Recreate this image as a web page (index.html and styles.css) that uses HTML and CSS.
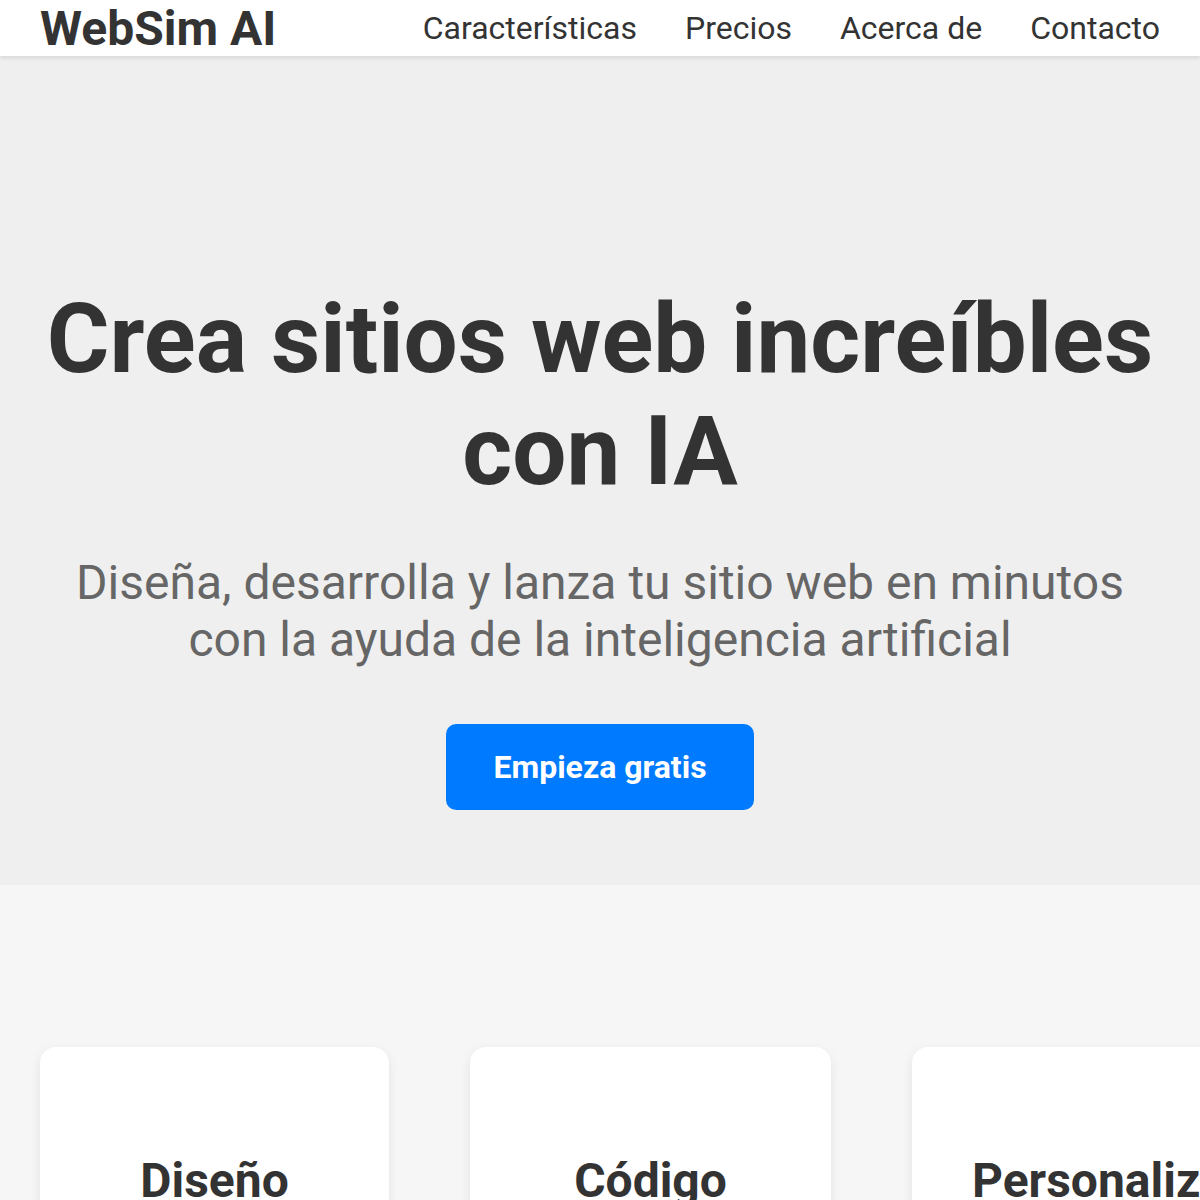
FILE: index.html
```html
<!DOCTYPE html>
<html lang="es">
<head>
<meta charset="utf-8">
<title>WebSim AI</title>
<link rel="stylesheet" href="styles.css">
</head>
<body>
<header class="site-header">
  <div class="logo">WebSim AI</div>
  <nav>
    <ul class="nav-list">
      <li><a href="#">Características</a></li>
      <li><a href="#">Precios</a></li>
      <li><a href="#">Acerca de</a></li>
      <li><a href="#">Contacto</a></li>
    </ul>
  </nav>
</header>
<section class="hero">
  <h1 class="hero-title">Crea sitios web increíbles con IA</h1>
  <p class="hero-subtitle">Diseña, desarrolla y lanza tu sitio web en minutos con la ayuda de la inteligencia artificial</p>
  <div class="hero-actions">
    <a class="btn-primary" href="#">Empieza gratis</a>
  </div>
</section>
<section class="features">
  <div class="feature-card card-design">
    <h2 class="feature-title">Diseño</h2>
  </div>
  <div class="feature-card card-code">
    <h2 class="feature-title">Código</h2>
  </div>
  <div class="feature-card card-custom">
    <h2 class="feature-title">Personalización</h2>
  </div>
</section>
</body>
</html>
```
FILE: styles.css
```css
html, body {
  margin: 0;
  padding: 0;
}
body {
  font-family: Roboto, "Liberation Sans", sans-serif;
  color: #333;
  background: #f6f6f6;
  overflow: hidden;
}
.site-header {
  display: flex;
  justify-content: space-between;
  align-items: center;
  height: 56px;
  padding: 0 40px 0 40px;
  background: #fff;
  box-shadow: 0 2px 4px rgba(0, 0, 0, 0.1);
  position: relative;
  z-index: 2;
}
.logo {
  font-size: 48px;
  font-weight: 700;
  line-height: normal;
  color: #333;
}
.nav-list {
  display: flex;
  gap: 48px;
  list-style: none;
  margin: 0;
  padding: 0;
}
.nav-list a {
  font-size: 32px;
  color: #333;
  text-decoration: none;
}
.hero {
  background: #efefef;
  text-align: center;
  padding: 227px 40px 75px;
}
.hero-title {
  font-size: 96px;
  font-weight: 700;
  line-height: normal;
  margin: 0 0 47px;
  color: #333;
}
.hero-subtitle {
  font-size: 48px;
  line-height: normal;
  margin: 0 0 56px;
  color: #666;
}
.hero-actions {
  display: flex;
  justify-content: center;
}
.btn-primary {
  display: inline-block;
  background: #007bff;
  color: #fff;
  font-size: 32px;
  font-weight: 700;
  line-height: normal;
  padding: 24px 47px;
  border-radius: 10px;
  text-decoration: none;
}
.features {
  display: flex;
  gap: 81px;
  padding: 162px 40px 80px;
  background: #f6f6f6;
}
.feature-card {
  flex: none;
  background: #fff;
  border-radius: 16px;
  box-shadow: 0 4px 12px rgba(0, 0, 0, 0.08);
  padding: 105px 60px 60px;
  text-align: center;
  min-height: 200px;
}
.card-design {
  width: 229px;
}
.card-code {
  width: 241px;
}
.feature-title {
  font-size: 48px;
  font-weight: 700;
  line-height: normal;
  margin: 0;
  color: #333;
  white-space: nowrap;
}
```
